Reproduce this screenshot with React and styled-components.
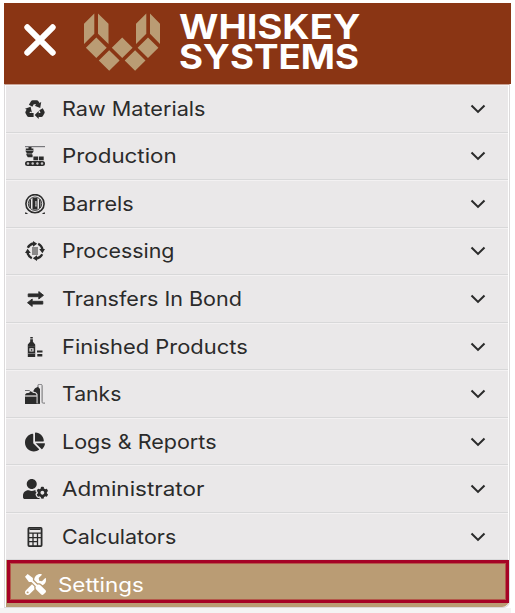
import React from 'react'
import styled, { createGlobalStyle } from 'styled-components'
import { FaChartPie, FaUserCog, FaTools } from 'react-icons/fa'


//================ Icons =====================================
const RecycleIcon = () => (
  <svg width="20" height="20" viewBox="0 0 20 20" fill="#2b2b2b">
    <g fill="none" stroke="#2b2b2b" strokeWidth="4" strokeLinejoin="round">
      <path d="M5.600 6.700L7.700 3.200h4L13 5.300" />
      <path d="M16 10.200l1.700 3.200-1.500 2.700h-3" />
      <path d="M8.600 16.100H3.800L2.300 13.400l1.500-2.600" />
    </g>
    <path d="M16.200 3l-1 6-5.600-2.200zM13.700 12v8L9.700 16.100zM0 9.800l5.600-2 1.300 5.800z" />
  </svg>
)

const ProductionIcon = () => (
  <svg width="20" height="20" viewBox="0 0 20 20" fill="#2b2b2b">
    <path d="M0 0h20v1.200H0z" fill="#77777b" />
    <path d="M3.500 1h3v1.400h1.900v3.400l-1.400 1.600v1.200h.6v2.600H2.800L1.400 9V7.600h1.200L.8 6V2.400h2.700z" />
    <path d="M.6 4.300h7.800v.6H.6zM2.500 7.600h4.500v.6H2.500z" fill="#aaa" />
    <path d="M8.400 10.600h4.700v3.700H8.400zM13.900 10.600h4.800v3.700h-4.800z" />
    <rect x="0" y="15" width="20" height="5" rx="2.500" />
    <g fill="#c9c7c8">
      <circle cx="3" cy="17.500" r="1.200" />
      <circle cx="7.700" cy="17.500" r="1.200" />
      <circle cx="12.400" cy="17.500" r="1.200" />
      <circle cx="17" cy="17.500" r="1.200" />
    </g>
  </svg>
)

const BarrelIcon = () => (
  <svg width="20" height="20" viewBox="0 0 20 20" fill="none" stroke="#2b2b2b">
    <circle cx="10" cy="9.700" r="9.100" strokeWidth="1.600" />
    <circle cx="10" cy="9.700" r="6.700" strokeWidth=".9" />
    <path d="M5.200 5.500v8.400M14.800 5.500v8.400" strokeWidth="1.500" />
    <rect x="7.500" y="4" width="5" height="11.500" fill="#2b2b2b" stroke="none" />
    <path d="M10.200 7.200h1.400v5.200h-1.400z" fill="#dedcdd" stroke="none" />
    <path d="M10.200 9h1.400M10.200 10.800h1.400" strokeWidth=".6" />
    <path d="M0 20l.5-2 2.700 2zM20 20l-.5-2-2.700 2z" fill="#2b2b2b" stroke="none" />
  </svg>
)

const ProcessingIcon = () => (
  <svg width="20" height="20" viewBox="0 0 20 20" fill="#2b2b2b">
    <g fill="none" stroke="#2b2b2b" strokeWidth="2.300">
      <path d="M2.800 6.800a7.900 7.900 0 0 1 5.700-4.300" />
      <path d="M13.200 2.800a7.900 7.900 0 0 1 4.300 5.700" />
      <path d="M17.200 13.200a7.900 7.900 0 0 1-5.700 4.300" />
      <path d="M6.800 17.200a7.900 7.900 0 0 1-4.300-5.700" />
    </g>
    <path d="M8 0l4.200 2.800L8 5.800zM20 8l-2.600 4.300L14.200 8zM12 20l-4.200-2.800 4.200-3zM0 12l2.600-4.300L5.800 12z" />
    <path d="M7 6.500h6v1H7zM7 8.500h6v1H7zM7 10.500h6v1H7zM7 12.500h6v1H7z" />
  </svg>
)

const TransferIcon = () => (
  <svg width="17" height="16" viewBox="0 0 17 16" fill="#2b2b2b" stroke="#2b2b2b" strokeWidth=".9" strokeLinejoin="round">
    <path d="M1.200 2.900h10.600V.6L16.500 4.300 11.800 8V5.700H1.200zM15.800 10.300H5.200V8L.5 11.700l4.700 3.700v-2.300h10.600z" />
  </svg>
)

const BottleIcon = () => (
  <svg width="20" height="20" viewBox="0 0 20 20" fill="#2b2b2b">
    <path d="M5.300 0h2.500v1.500H5.300zM5.200 2.300h2.700v2.500L10.200 7.500v2.200H2.800V7.500l2.400-2.700z" />
    <path d="M2.800 9.600h7.400V20H2.800zM4.400 11.200v3.300h4.200v-3.300z" fillRule="evenodd" />
    <path d="M5.700 12.200h1.700v1.500H5.700z" />
    <path d="M2.800 16h7.400v.7H2.800z" fill="#99979a" />
    <path d="M12 13.600h5.500v2H12zM12.300 16.900h5v2.600h-5z" />
  </svg>
)

const TanksIcon = () => (
  <svg width="20" height="20" viewBox="0 0 20 20" fill="#2b2b2b">
    <path d="M0 12.500h11.700v6.800H0zM0 19.300h15V20H0z" />
    <path d="M0 11.500c0-2 2-2.700 4.500-2.700V7.700h3v1.100c2.200 0 4.200.7 4.200 2.700z" />
    <path d="M8.500 6.500l1.500-2.200 3-1.500 2 2.200v14.500h-2.600V10c-1-1.800-2.200-2-3.900-2.200z" />
    <path d="M0 6.500h4.500l1.500 1.500M13 3V1.200C13 .5 13.500.4 14.500.4h1.200c1 0 1.400.5 1.400 1.400v16c0 1 .3 1.300 1.200 1.300H20" fill="none" stroke="#6d6d70" strokeWidth="1" />
    <path d="M9 8.300c2 .2 3.100.9 3.100 3.200v8M.3 12h11.500" fill="none" stroke="#c9c7c8" strokeWidth=".6" />
  </svg>
)

const CalculatorIcon = () => (
  <svg width="20" height="20" viewBox="0 0 20 20" fill="none" stroke="#2b2b2b">
    <rect x="3.400" y=".9" width="13.200" height="18.200" rx=".8" strokeWidth="1.800" />
    <path d="M4 6.200h12M4 10.700h12M4 14.700h9M8 6.200V19M12.500 6.200V19" strokeWidth="1.300" />
    <path d="M4.500 2.300h11" strokeWidth="1.400" />
  </svg>
)

const Chevron = () => (
  <svg width="16" height="10" viewBox="0 0 16 10" fill="none">
    <path d="M1.500 1.600L8 7.900l6.500-6.300" stroke="#2b2b2b" strokeWidth="2.100" />
  </svg>
)

const LogoMark = () => (
  <svg width="76" height="58" viewBox="0 0 76 58" fill="#ba9c74">
    <path d="M0 10.700L10.300.4v20.300L0 31zM14 .4l10.500 10.300V31L14 20.700z" />
    <path d="M52 10.700L62.300.4v20.300L52 31zM66 .4l10 10.300V31L66 20.700z" />
    <path d="M12.300 24.400l10.400 10.300-10.400 10.200L1.900 34.700zM38.200 24.400l10.400 10.300-10.400 10.200-10.400-10.200zM64 24.400l10.400 10.300L64 44.900 53.600 34.700z" />
    <path d="M25.200 37.200l10.400 10.300-10.400 10.200-10.400-10.200zM51.100 37.200l10.400 10.300-10.400 10.200-10.400-10.200z" />
  </svg>
)

const CloseIcon = () => (
  <svg width="32" height="32" viewBox="0 0 32 32">
    <path d="M3.300 3.300l25.400 25.400M28.700 3.300L3.300 28.700" stroke="#fff" strokeWidth="6" strokeLinecap="round" />
  </svg>
)

//================ Menu items =====================================
const items = [
  { label: "Raw Materials", icon: <RecycleIcon />, stretch: 1.082 },
  { label: "Production", icon: <ProductionIcon />, stretch: 1.117 },
  { label: "Barrels", icon: <BarrelIcon />, stretch: 1.08 },
  { label: "Processing", icon: <ProcessingIcon />, stretch: 1.07 },
  { label: "Transfers In Bond", icon: <TransferIcon />, stretch: 1.077 },
  { label: "Finished Products", icon: <BottleIcon />, stretch: 1.095 },
  { label: "Tanks", icon: <TanksIcon />, stretch: 1.06 },
  { label: "Logs & Reports", icon: <FaChartPie size={20} />, stretch: 1.077 },
  { label: "Administrator", icon: <FaUserCog size={25} style={{ height: 20 }} />, stretch: 1.123 },
  { label: "Calculators", icon: <CalculatorIcon />, stretch: 1.073 },
]

const App = () => {
  return (<>
    <GlobalStyle />
    <Page>
      <Header>
        <CloseButton><CloseIcon /></CloseButton>
        <LogoMark />
        <Wordmark>
          <Word $stretch={1.134}>WHISKEY</Word>
          <Word $stretch={1.096}>SYSTEMS</Word>
        </Wordmark>
      </Header>
      <Menu>
        {items.map((item) => (
          <Row key={item.label}>
            <IconBox>{item.icon}</IconBox>
            <Label $stretch={item.stretch}>{item.label}</Label>
            <Chevron />
          </Row>
        ))}
        <ActiveRow>
          <Outline>
            <IconBox><FaTools size={21} /></IconBox>
            <Label $stretch={1.12}>Settings</Label>
          </Outline>
        </ActiveRow>
      </Menu>
    </Page>
  </>
  )
}

const GlobalStyle = createGlobalStyle`
* { box-sizing: border-box; }
body {
margin: 0;
background: #fff;
overflow: hidden;
}
svg { display: block; flex: none; }
`

const Page = styled.div`
width: 511px;
height: 613px;
padding: 3px 0 0 4px;
font-family: Inter, "Open Sans", sans-serif;
background: linear-gradient(#fff 608px, #f4f4f4 608px);
`

const Header = styled.header`
height: 81px;
display: flex;
align-items: flex-start;
padding: 10px 0 0 20px;
background: #8a3514;
`

const CloseButton = styled.button`
width: 32px;
height: 32px;
margin: 11px 28px 0 0;
padding: 0;
border: none;
background: none;
`

const Wordmark = styled.div`
display: flex;
flex-direction: column;
align-items: flex-start;
margin: 0 0 0 19px;
`

const Word = styled.span`
font-size: 33.500px;
line-height: 29.500px;
font-weight: 700;
color: #fff;
transform: scaleX(${(props) => props.$stretch});
transform-origin: left;
`

const Menu = styled.nav`
width: 506px;
height: 524px;
border: 1px solid #dcdadb;
border-top-color: #c9a294;
border-bottom-right-radius: 7px;
padding: 0 1px;
`

const Row = styled.div`
height: 47.550px;
display: flex;
align-items: center;
padding: 0 22px 0 15px;
border-bottom: 1px solid #d8d8d9;
border-top: 1px solid #f3f1f2;
background: #eae8e9;
color: #2b2b2b;
`

const IconBox = styled.span`
width: 28px;
flex: none;
display: flex;
justify-content: center;
`

const Label = styled.span`
margin: 0 auto 0 13px;
font-size: 20px;
line-height: 28px;
font-weight: 400;
white-space: nowrap;
transform: scaleX(${(props) => props.$stretch});
transform-origin: left;
`

const ActiveRow = styled.div`
height: 47px;
padding-left: 1px;
margin-right: -1px;
background: #ba9c74;
border-bottom-right-radius: 7px;
color: #fff;
`

const Outline = styled.div`
height: 43px;
display: flex;
align-items: center;
padding: 6px 0 0 11px;
border: 3px solid #a60326;
box-shadow: inset 0 0 0 1px #b4574a;

${Label} { margin-left: 9px; }
`

export default App
